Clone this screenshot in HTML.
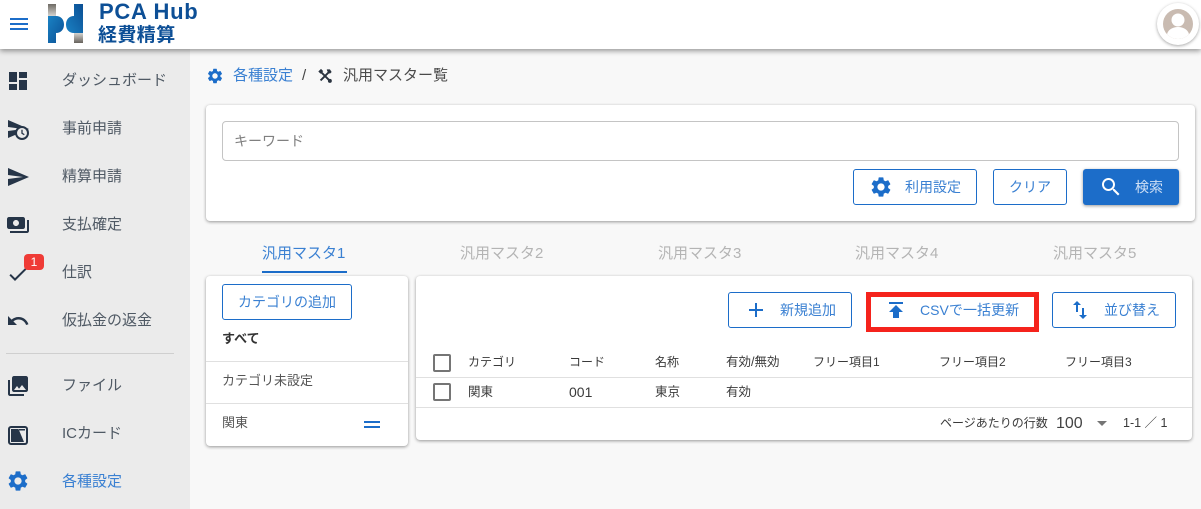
<!DOCTYPE html>
<html lang="ja"><head><meta charset="utf-8"><style>
*{box-sizing:border-box}
html,body{margin:0;padding:0}
body{width:1201px;height:509px;overflow:hidden;background:#f8f8f8;position:relative;font-family:"Liberation Sans","Noto Sans CJK JP",sans-serif;color:#333}
.a{position:absolute;white-space:nowrap}
svg{position:absolute;display:block}
.side{left:0;top:49px;width:190px;height:460px;background:#ebebeb}
.top{left:0;top:0;width:1201px;height:49px;background:#fff;box-shadow:0 2px 5px rgba(0,0,0,.4);z-index:5}
.nav{left:62px;font-size:15px;line-height:20px;color:#4f5964}
.card{background:#fff;border-radius:4px;box-shadow:0 1px 3px rgba(0,0,0,.4)}
.btn{border:1px solid #1c6dc9;border-radius:3px;color:#3a80d2;font-size:14px;height:36px;line-height:34px;background:#fff}
.t{font-size:12px;line-height:16px;color:#3a3a3a}
.tab{font-size:15px;line-height:20px;top:244px;color:#b4b4b4}
.line{height:1px;background:#e0e0e0}
.cb{width:18px;height:18px;border:2px solid #757575;border-radius:2px}
</style></head><body>
<div class="a side"></div>
<div class="a top"></div>
<div style="position:absolute;inset:0;z-index:6;pointer-events:none">
<svg style="left:7px;top:12px" width="24" height="24" viewBox="0 0 24 24" fill="#1c6dc9"><path d="M3 18h18v-2H3v2zm0-5h18v-2H3v2zm0-7v2h18V6H3z"/></svg>
<svg style="left:47px;top:3px" width="37" height="41" viewBox="0 0 37 41">
<defs>
<linearGradient id="g1" x1="0" y1="0" x2="0" y2="1"><stop offset="0" stop-color="#6e6a64"/><stop offset="1" stop-color="#d5d3cf"/></linearGradient>
<linearGradient id="g2" x1="0" y1="0" x2="0" y2="1"><stop offset="0" stop-color="#d5d3cf"/><stop offset="1" stop-color="#66625c"/></linearGradient>
<linearGradient id="b1" x1="0" y1="0" x2="1" y2="1"><stop offset="0" stop-color="#1a82c4"/><stop offset="1" stop-color="#0b4f94"/></linearGradient>
<linearGradient id="b2" x1="0" y1="1" x2="1" y2="0"><stop offset="0" stop-color="#1a82c4"/><stop offset="1" stop-color="#0b4f94"/></linearGradient>
</defs>
<rect x="1" y="1" width="8" height="12" fill="url(#g1)"/>
<path d="M1 13h8c5 0 8 3.500 8 8.500s-3 8.500-8 8.500v10H1z" fill="url(#b1)"/>
<path d="M36 1v29h-9c-5 0-8-3.500-8-8.500s3-8.500 8-8.500V1z" fill="url(#b2)"/>
<rect x="27" y="30" width="9" height="10" fill="url(#g2)"/>
</svg>
<div class="a" style="left:99px;top:-1px;font-size:22px;line-height:26px;font-weight:700;color:#0d4f96;letter-spacing:.7px">PCA Hub</div>
<div class="a" style="left:98px;top:25px;font-size:19px;line-height:22px;font-weight:700;color:#0d4f96;letter-spacing:.4px">経費精算</div>
<div class="a" style="left:1157px;top:3px;width:42px;height:42px;border-radius:50%;background:#fff;box-shadow:0 1px 3px rgba(0,0,0,.35)"></div>
<svg style="left:1163px;top:9px" width="30" height="30" viewBox="0 0 30 30"><defs><clipPath id="c"><circle cx="15" cy="15" r="15"/></clipPath></defs><circle cx="15" cy="15" r="15" fill="#c9bbb1"/><g clip-path="url(#c)"><circle cx="15" cy="11" r="6.500" fill="#fff"/><ellipse cx="15" cy="26" rx="11" ry="8" fill="#fff"/></g></svg>
</div>

<svg style="left:6px;top:69px" width="24" height="24" viewBox="0 0 24 24" fill="#263548"><path d="M3 13h8V3H3v10zm0 8h8v-6H3v6zm10 0h8V11h-8v10zm0-18v6h8V3h-8z"/></svg>
<div class="a nav" style="top:71px">ダッシュボード</div>
<svg style="left:6px;top:117px" width="24" height="24" viewBox="0 0 24 24"><path fill="#263548" d="M2.010 21L23 12 2.010 3 2 10l15 2-15 2z"/><circle cx="16" cy="16" r="6" fill="#ebebeb" stroke="#263548" stroke-width="2"/><path d="M16 12.800v3.500l2.300 1.400" stroke="#263548" stroke-width="1.300" fill="none"/></svg>
<div class="a nav" style="top:119px">事前申請</div>
<svg style="left:6px;top:165px" width="24" height="24" viewBox="0 0 24 24" fill="#263548"><path d="M2.010 21L23 12 2.010 3 2 10l15 2-15 2z"/></svg>
<div class="a nav" style="top:167px">精算申請</div>
<svg style="left:6px;top:213px" width="24" height="24" viewBox="0 0 24 24" fill="#263548"><path d="M19 14V6c0-1.100-.9-2-2-2H3c-1.100 0-2 .9-2 2v8c0 1.100.9 2 2 2h14c1.100 0 2-.9 2-2zm-9-1c-1.660 0-3-1.340-3-3s1.340-3 3-3 3 1.340 3 3-1.340 3-3 3zm13-6v11c0 1.100-.9 2-2 2H4v-2h17V7h2z"/></svg>
<div class="a nav" style="top:215px">支払確定</div>
<svg style="left:6px;top:262px" width="24" height="24" viewBox="0 0 24 24" fill="#263548"><path d="M9 16.170L4.830 12l-1.420 1.410L9 19 21 7l-1.410-1.410z"/></svg>
<div class="a" style="left:24px;top:254px;width:20px;height:16px;border-radius:4px;background:#ef3b36;color:#fff;font-size:12px;line-height:16px;text-align:center">1</div>
<div class="a nav" style="top:263px">仕訳</div>
<svg style="left:6px;top:309px" width="24" height="24" viewBox="0 0 24 24" fill="#263548"><path d="M12.500 8c-2.650 0-5.050.99-6.900 2.600L2 7v9h9l-3.620-3.620c1.390-1.160 3.160-1.880 5.120-1.880 3.540 0 6.550 2.310 7.600 5.500l2.370-.78C21.080 11.030 17.150 8 12.500 8z"/></svg>
<div class="a nav" style="top:311px">仮払金の返金</div>
<div class="a" style="left:6px;top:353px;width:168px;height:1px;background:#cfcfcf"></div>
<svg style="left:6px;top:374px" width="24" height="24" viewBox="0 0 24 24" fill="#263548"><path d="M22 16V4c0-1.100-.9-2-2-2H8c-1.100 0-2 .9-2 2v12c0 1.100.9 2 2 2h12c1.100 0 2-.9 2-2zm-11-4l2.030 2.710L16 11l4 5H8l3-4zM2 6v14c0 1.100.9 2 2 2h14v-2H4V6H2z"/></svg>
<div class="a nav" style="top:376px">ファイル</div>
<svg style="left:6px;top:422px" width="24" height="24" viewBox="0 0 24 24"><rect x="3" y="5" width="18" height="17" rx="2" fill="none" stroke="#263548" stroke-width="2"/><path d="M5 7h7.500L18 20H5z" fill="#263548"/><rect x="13" y="7" width="6" height="1.500" fill="#263548"/></svg>
<div class="a nav" style="top:424px">ICカード</div>
<svg style="left:6px;top:469px" width="24" height="24" viewBox="0 0 24 24" fill="#1c6dc9"><path d="M19.140 12.940c.04-.3.06-.61.06-.94 0-.32-.02-.64-.07-.94l2.030-1.580c.18-.14.23-.41.12-.61l-1.920-3.320c-.12-.22-.37-.29-.59-.22l-2.390.96c-.5-.38-1.030-.7-1.620-.94l-.36-2.540c-.04-.24-.24-.41-.48-.41h-3.840c-.24 0-.43.17-.47.41l-.36 2.540c-.59.24-1.130.57-1.620.94l-2.390-.96c-.22-.08-.47 0-.59.22L2.740 8.870c-.12.21-.08.47.12.61l2.030 1.580c-.05.3-.09.63-.09.94s.02.64.07.94l-2.030 1.580c-.18.14-.23.41-.12.61l1.920 3.320c.12.22.37.29.59.22l2.390-.96c.5.38 1.030.7 1.620.94l.36 2.540c.05.24.24.41.48.41h3.840c.24 0 .44-.17.47-.41l.36-2.540c.59-.24 1.130-.56 1.620-.94l2.390.96c.22.08.47 0 .59-.22l1.920-3.320c.12-.22.07-.47-.12-.61l-2.010-1.580zM12 15.600c-1.980 0-3.600-1.620-3.600-3.600s1.620-3.600 3.600-3.600 3.600 1.620 3.600 3.600-1.620 3.600-3.600 3.600z"/></svg>
<div class="a nav" style="top:472px;color:#3a80d2">各種設定</div>

<svg style="left:206px;top:67px" width="18" height="18" viewBox="0 0 24 24" fill="#1c6dc9"><path d="M19.140 12.940c.04-.3.06-.61.06-.94 0-.32-.02-.64-.07-.94l2.030-1.580c.18-.14.23-.41.12-.61l-1.920-3.320c-.12-.22-.37-.29-.59-.22l-2.390.96c-.5-.38-1.030-.7-1.620-.94l-.36-2.540c-.04-.24-.24-.41-.48-.41h-3.840c-.24 0-.43.17-.47.41l-.36 2.540c-.59.24-1.130.57-1.620.94l-2.390-.96c-.22-.08-.47 0-.59.22L2.740 8.870c-.12.21-.08.47.12.61l2.030 1.580c-.05.3-.09.63-.09.94s.02.64.07.94l-2.030 1.580c-.18.14-.23.41-.12.61l1.920 3.320c.12.22.37.29.59.22l2.390-.96c.5.38 1.030.7 1.620.94l.36 2.540c.05.24.24.41.48.41h3.840c.24 0 .44-.17.47-.41l.36-2.540c.59-.24 1.130-.56 1.620-.94l2.390.96c.22.08.47 0 .59-.22l1.920-3.320c.12-.22.07-.47-.12-.61l-2.010-1.580zM12 15.600c-1.980 0-3.600-1.620-3.600-3.600s1.620-3.600 3.600-3.600 3.600 1.620 3.600 3.600-1.620 3.600-3.600 3.600z"/></svg>
<div class="a" style="left:233px;top:67px;font-size:15px;line-height:18px;color:#3a80d2">各種設定</div>
<div class="a" style="left:302px;top:67px;font-size:15px;line-height:18px;color:#444">/</div>
<svg style="left:317px;top:68px" width="16" height="16" viewBox="0 0 18 18"><path d="M3 3l12 12" stroke="#2b3440" stroke-width="2.200"/><path d="M15 3L4 14" stroke="#2b3440" stroke-width="2.200"/><path d="M1.500 4l3-3 2.500 2.500-3 3z" fill="#2b3440"/><path d="M11 1.500h3.500l2 3-2 2-3-3z" fill="#2b3440"/><circle cx="14.500" cy="14.500" r="2.200" fill="#2b3440"/></svg>
<div class="a" style="left:343px;top:67px;font-size:15px;line-height:18px;color:#4a4a4a">汎用マスター覧</div>

<div class="a card" style="left:206px;top:105px;width:989px;height:116px"></div>
<div class="a" style="left:222px;top:121px;width:957px;height:40px;border:1px solid #c4c4c4;border-radius:4px;background:#fff"></div>
<div class="a" style="left:234px;top:132px;font-size:14px;line-height:18px;color:#808080">キーワード</div>
<div class="a btn" style="left:853px;top:169px;width:124px"></div>
<svg style="left:869px;top:175px" width="24" height="24" viewBox="0 0 24 24" fill="#1c6dc9"><path d="M19.140 12.940c.04-.3.06-.61.06-.94 0-.32-.02-.64-.07-.94l2.030-1.580c.18-.14.23-.41.12-.61l-1.920-3.320c-.12-.22-.37-.29-.59-.22l-2.390.96c-.5-.38-1.030-.7-1.620-.94l-.36-2.540c-.04-.24-.24-.41-.48-.41h-3.840c-.24 0-.43.17-.47.41l-.36 2.540c-.59.24-1.130.57-1.620.94l-2.390-.96c-.22-.08-.47 0-.59.22L2.740 8.870c-.12.21-.08.47.12.61l2.030 1.580c-.05.3-.09.63-.09.94s.02.64.07.94l-2.030 1.580c-.18.14-.23.41-.12.61l1.920 3.320c.12.22.37.29.59.22l2.390-.96c.5.38 1.030.7 1.620.94l.36 2.540c.05.24.24.41.48.41h3.840c.24 0 .44-.17.47-.41l.36-2.540c.59-.24 1.130-.56 1.620-.94l2.390.96c.22.08.47 0 .59-.22l1.920-3.320c.12-.22.07-.47-.12-.61l-2.010-1.580zM12 15.600c-1.980 0-3.600-1.620-3.600-3.600s1.620-3.600 3.600-3.600 3.600 1.620 3.600 3.600-1.620 3.600-3.600 3.600z"/></svg>
<div class="a" style="left:905px;top:178px;font-size:14px;line-height:18px;color:#3a80d2">利用設定</div>
<div class="a btn" style="left:993px;top:169px;width:74px;text-align:center">クリア</div>
<div class="a" style="left:1083px;top:169px;width:96px;height:36px;border-radius:3px;background:#1c6dc9;box-shadow:0 1px 3px rgba(0,0,0,.4)"></div>
<svg style="left:1099px;top:175px" width="24" height="24" viewBox="0 0 24 24" fill="#fff"><path d="M15.500 14h-.79l-.28-.27C15.410 12.590 16 11.110 16 9.500 16 5.910 13.090 3 9.500 3S3 5.910 3 9.500 5.910 16 9.500 16c1.610 0 3.090-.59 4.230-1.570l.27.28v.79l5 4.990L20.490 19l-4.990-5zm-6 0C7.010 14 5 11.990 5 9.500S7.010 5 9.500 5 14 7.010 14 9.500 11.990 14 9.500 14z"/></svg>
<div class="a" style="left:1135px;top:178px;font-size:14px;line-height:18px;color:#cfe0f5">検索</div>

<div class="a tab" style="left:262px;color:#3a80d2">汎用マスタ1</div>
<div class="a tab" style="left:460px">汎用マスタ2</div>
<div class="a tab" style="left:658px">汎用マスタ3</div>
<div class="a tab" style="left:855px">汎用マスタ4</div>
<div class="a tab" style="left:1053px">汎用マスタ5</div>
<div class="a" style="left:262px;top:271px;width:85px;height:2px;background:#1c6dc9"></div>

<div class="a card" style="left:206px;top:276px;width:202px;height:170px"></div>
<div class="a btn" style="left:222px;top:284px;width:130px;text-align:center">カテゴリの追加</div>
<div class="a" style="left:222px;top:330px;font-size:13px;line-height:17px;font-weight:700;color:#333">すべて</div>
<div class="a line" style="left:206px;top:361px;width:202px"></div>
<div class="a t" style="left:222px;top:373px;color:#555;font-size:13px">カテゴリ未設定</div>
<div class="a line" style="left:206px;top:403px;width:202px"></div>
<div class="a t" style="left:222px;top:415px;color:#555;font-size:13px">関東</div>
<div class="a" style="left:364px;top:421px;width:16px;height:2px;background:#1c6dc9"></div>
<div class="a" style="left:364px;top:426px;width:16px;height:2px;background:#1c6dc9"></div>

<div class="a card" style="left:416px;top:276px;width:776px;height:164px"></div>
<div class="a btn" style="left:728px;top:292px;width:124px"></div>
<svg style="left:744px;top:298px" width="24" height="24" viewBox="0 0 24 24" fill="#1c6dc9"><path d="M19 13h-6v6h-2v-6H5v-2h6V5h2v6h6v2z"/></svg>
<div class="a" style="left:780px;top:301px;font-size:14px;line-height:18px;color:#3a80d2">新規追加</div>
<div class="a" style="left:866px;top:292px;width:173px;height:40px;border:5px solid #f5231c;background:#fff"></div>
<svg style="left:884px;top:298px" width="24" height="24" viewBox="0 0 24 24" fill="#1c6dc9"><path d="M5 4v2h14V4H5zm0 10h4v6h6v-6h4l-7-7-7 7z"/></svg>
<div class="a" style="left:920px;top:301px;font-size:14px;line-height:18px;color:#3a80d2;letter-spacing:.05px">CSVで一括更新</div>
<div class="a btn" style="left:1052px;top:292px;width:124px"></div>
<svg style="left:1068px;top:298px" width="24" height="24" viewBox="0 0 24 24" fill="#1c6dc9"><path d="M16 17.010V10h-2v7.010h-3L15 21l4-3.990h-3zM9 3L5 6.990h3V14h2V6.990h3L9 3z"/></svg>
<div class="a" style="left:1104px;top:301px;font-size:14px;line-height:18px;color:#3a80d2">並び替え</div>

<div class="a cb" style="left:433px;top:354px"></div>
<div class="a t" style="left:468px;top:354px">カテゴリ</div>
<div class="a t" style="left:569px;top:354px">コード</div>
<div class="a t" style="left:655px;top:354px">名称</div>
<div class="a t" style="left:726px;top:354px;font-size:12.500px">有効/無効</div>
<div class="a t" style="left:813px;top:354px">フリー項目1</div>
<div class="a t" style="left:939px;top:354px">フリー項目2</div>
<div class="a t" style="left:1065px;top:354px">フリー項目3</div>
<div class="a line" style="left:416px;top:377px;width:776px"></div>
<div class="a cb" style="left:433px;top:383px"></div>
<div class="a t" style="left:468px;top:384px;font-size:12.500px">関東</div>
<div class="a t" style="left:569px;top:384px;font-size:14px">001</div>
<div class="a t" style="left:655px;top:384px;font-size:12.500px">東京</div>
<div class="a t" style="left:726px;top:384px;font-size:12.500px">有効</div>
<div class="a line" style="left:416px;top:407px;width:776px"></div>
<div class="a t" style="left:940px;top:415px">ページあたりの行数</div>
<div class="a" style="left:1056px;top:415px;font-size:16px;line-height:18px;color:#444">100</div>
<div class="a" style="left:1097px;top:421px;width:0;height:0;border-left:5px solid transparent;border-right:5px solid transparent;border-top:5px solid #757575"></div>
<div class="a t" style="left:1123px;top:415px;font-size:12.500px">1-1 ／ 1</div>
</body></html>
